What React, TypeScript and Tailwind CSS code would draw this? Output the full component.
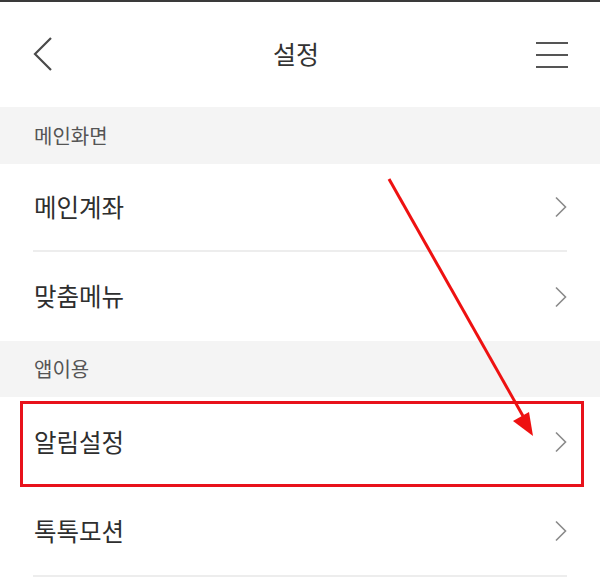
import { type ReactNode } from 'react'

const font = { fontFamily: '"Noto Sans CJK KR", "Noto Sans", sans-serif' }

function ChevronRight() {
  return (
    <svg width="14" height="22" viewBox="0 0 14 22" fill="none">
      <path d="M2 1.5 L11.5 11 L2 20.5" stroke="#8a8a8a" strokeWidth="1.6" />
    </svg>
  )
}

function SectionHeader({ title, height }: { title: string; height: string }) {
  return (
    <div className={`flex items-center bg-[#f4f4f4] pl-[34px] ${height}`}>
      <span className="text-[20px] leading-none font-normal text-[#555555]">
        {title}
      </span>
    </div>
  )
}

function Row({
  label,
  height,
  divider = true,
  children,
}: {
  label: string
  height: string
  divider?: boolean
  children?: ReactNode
}) {
  return (
    <div className={`relative flex flex-col px-[33px] ${height}`}>
      <div className="flex flex-1 items-center justify-between">
        <span className="pl-[1px] text-[24.5px] leading-none font-normal text-[#2e2e2e]">
          {label}
        </span>
        <span className="mr-[-1px] flex">
          <ChevronRight />
        </span>
      </div>
      {divider ? <div className="h-[2px] bg-[#ededed]" /> : null}
      {children}
    </div>
  )
}

export default function App() {
  return (
    <div
      className="relative h-[588px] w-[600px] overflow-hidden bg-white"
      style={font}
    >
      <div className="h-[2px] bg-[#3a3a3a]" />

      <header className="flex h-[105px] items-center justify-between pr-[32px] pl-[32px] pb-[2px]">
        <svg width="22" height="36" viewBox="0 0 22 36" fill="none">
          <path d="M19 2 L3 18 L19 34" stroke="#4a4a4a" strokeWidth="2.2" />
        </svg>
        <h1 className="pl-[2px] text-[25px] leading-none font-normal text-[#333333]">
          설정
        </h1>
        <svg width="32" height="28" viewBox="0 0 32 28" fill="none">
          <path
            d="M0 3 H32 M0 15 H32 M0 27 H32"
            stroke="#555555"
            strokeWidth="2"
          />
        </svg>
      </header>

      <SectionHeader title="메인화면" height="h-[57px]" />
      <Row label="메인계좌" height="h-[88px]" />
      <Row label="맞춤메뉴" height="h-[89px]" divider={false} />

      <SectionHeader title="앱이용" height="h-[56px]" />
      <Row label="알림설정" height="h-[90px]" divider={false}>
        <div className="absolute top-[4px] right-[16px] bottom-[0px] left-[20px] border-[3px] border-[#e8121b]" />
      </Row>
      <Row label="톡톡모션" height="h-[90px]" />

      {/* annotation arrow */}
      <svg
        className="pointer-events-none absolute top-0 left-0"
        width="600"
        height="588"
        viewBox="0 0 600 588"
      >
        <line
          x1="389"
          y1="179"
          x2="523"
          y2="416"
          stroke="#ee1111"
          strokeWidth="3"
        />
        <polygon points="533,436 513,421 529,412" fill="#ee1111" />
      </svg>
    </div>
  )
}
